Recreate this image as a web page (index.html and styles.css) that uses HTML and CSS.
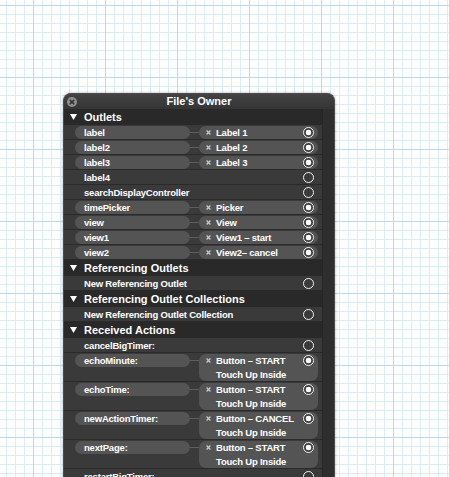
FILE: index.html
```html
<!DOCTYPE html>
<html>
<head>
<meta charset="utf-8">
<link rel="stylesheet" href="styles.css">
</head>
<body>
<div class="canvas">
  <div class="panel">
    <div class="titlebar">
      <span class="close"><svg width="10" height="10" viewBox="0 0 10 10"><circle cx="5" cy="5" r="5" fill="#8e8e8e"/><path d="M3.2 3.2 L6.8 6.8 M6.8 3.2 L3.2 6.8" stroke="#2e2e2e" stroke-width="1.6" stroke-linecap="round"/></svg></span>
      <span class="title">File's Owner</span>
      <span></span>
    </div>
    <div class="body">
      <div class="list">
        <div class="section"><svg class="tri" width="7" height="6" viewBox="0 0 7 6"><polygon points="0,0 7,0 3.5,6" fill="#fff"/></svg>Outlets</div>

        <div class="row"><div class="src pill">label</div><div class="wire"></div><div class="dst pill"><svg class="xm" width="5" height="5" viewBox="0 0 5 5"><path d="M0.6 0.6 L4.4 4.4 M4.4 0.6 L0.6 4.4" stroke="#c4c4c4" stroke-width="1.4"/></svg><span class="txt">Label 1</span><span class="radio on"></span></div></div>
        <div class="row"><div class="src pill">label2</div><div class="wire"></div><div class="dst pill"><svg class="xm" width="5" height="5" viewBox="0 0 5 5"><path d="M0.6 0.6 L4.4 4.4 M4.4 0.6 L0.6 4.4" stroke="#c4c4c4" stroke-width="1.4"/></svg><span class="txt">Label 2</span><span class="radio on"></span></div></div>
        <div class="row"><div class="src pill">label3</div><div class="wire"></div><div class="dst pill"><svg class="xm" width="5" height="5" viewBox="0 0 5 5"><path d="M0.6 0.6 L4.4 4.4 M4.4 0.6 L0.6 4.4" stroke="#c4c4c4" stroke-width="1.4"/></svg><span class="txt">Label 3</span><span class="radio on"></span></div></div>
        <div class="row"><div class="src">label4</div><div></div><div class="dst"><span class="radio"></span></div></div>
        <div class="row"><div class="src">searchDisplayController</div><div></div><div class="dst"><span class="radio"></span></div></div>
        <div class="row"><div class="src pill">timePicker</div><div class="wire"></div><div class="dst pill"><svg class="xm" width="5" height="5" viewBox="0 0 5 5"><path d="M0.6 0.6 L4.4 4.4 M4.4 0.6 L0.6 4.4" stroke="#c4c4c4" stroke-width="1.4"/></svg><span class="txt">Picker</span><span class="radio on"></span></div></div>
        <div class="row"><div class="src pill">view</div><div class="wire"></div><div class="dst pill"><svg class="xm" width="5" height="5" viewBox="0 0 5 5"><path d="M0.6 0.6 L4.4 4.4 M4.4 0.6 L0.6 4.4" stroke="#c4c4c4" stroke-width="1.4"/></svg><span class="txt">View</span><span class="radio on"></span></div></div>
        <div class="row"><div class="src pill">view1</div><div class="wire"></div><div class="dst pill"><svg class="xm" width="5" height="5" viewBox="0 0 5 5"><path d="M0.6 0.6 L4.4 4.4 M4.4 0.6 L0.6 4.4" stroke="#c4c4c4" stroke-width="1.4"/></svg><span class="txt">View1 – start</span><span class="radio on"></span></div></div>
        <div class="row"><div class="src pill">view2</div><div class="wire"></div><div class="dst pill"><svg class="xm" width="5" height="5" viewBox="0 0 5 5"><path d="M0.6 0.6 L4.4 4.4 M4.4 0.6 L0.6 4.4" stroke="#c4c4c4" stroke-width="1.4"/></svg><span class="txt">View2– cancel</span><span class="radio on"></span></div></div>

        <div class="section"><svg class="tri" width="7" height="6" viewBox="0 0 7 6"><polygon points="0,0 7,0 3.5,6" fill="#fff"/></svg>Referencing Outlets</div>
        <div class="row"><div class="src">New Referencing Outlet</div><div></div><div class="dst"><span class="radio"></span></div></div>

        <div class="section"><svg class="tri" width="7" height="6" viewBox="0 0 7 6"><polygon points="0,0 7,0 3.5,6" fill="#fff"/></svg>Referencing Outlet Collections</div>
        <div class="row"><div class="src">New Referencing Outlet Collection</div><div></div><div class="dst"><span class="radio"></span></div></div>

        <div class="section"><svg class="tri" width="7" height="6" viewBox="0 0 7 6"><polygon points="0,0 7,0 3.5,6" fill="#fff"/></svg>Received Actions</div>
        <div class="row"><div class="src">cancelBigTimer:</div><div></div><div class="dst"><span class="radio"></span></div></div>
        <div class="row tall"><div class="src pill">echoMinute:</div><div class="wire"></div><div class="dst pill"><svg class="xm" width="5" height="5" viewBox="0 0 5 5"><path d="M0.6 0.6 L4.4 4.4 M4.4 0.6 L0.6 4.4" stroke="#c4c4c4" stroke-width="1.4"/></svg><span class="txt">Button – START<br>Touch Up Inside</span><span class="radio on"></span></div></div>
        <div class="row tall"><div class="src pill">echoTime:</div><div class="wire"></div><div class="dst pill"><svg class="xm" width="5" height="5" viewBox="0 0 5 5"><path d="M0.6 0.6 L4.4 4.4 M4.4 0.6 L0.6 4.4" stroke="#c4c4c4" stroke-width="1.4"/></svg><span class="txt">Button – START<br>Touch Up Inside</span><span class="radio on"></span></div></div>
        <div class="row tall"><div class="src pill">newActionTimer:</div><div class="wire"></div><div class="dst pill"><svg class="xm" width="5" height="5" viewBox="0 0 5 5"><path d="M0.6 0.6 L4.4 4.4 M4.4 0.6 L0.6 4.4" stroke="#c4c4c4" stroke-width="1.4"/></svg><span class="txt">Button – CANCEL<br>Touch Up Inside</span><span class="radio on"></span></div></div>
        <div class="row tall"><div class="src pill">nextPage:</div><div class="wire"></div><div class="dst pill"><svg class="xm" width="5" height="5" viewBox="0 0 5 5"><path d="M0.6 0.6 L4.4 4.4 M4.4 0.6 L0.6 4.4" stroke="#c4c4c4" stroke-width="1.4"/></svg><span class="txt">Button – START<br>Touch Up Inside</span><span class="radio on"></span></div></div>
        <div class="row"><div class="src">restartBigTimer:</div><div></div><div class="dst"><span class="radio"></span></div></div>
        <div class="row"><div class="src">startBigTimer:</div><div></div><div class="dst"><span class="radio"></span></div></div>
      </div>
      <div class="scroller"></div>
    </div>
  </div>
</div>
</body>
</html>
```

FILE: styles.css
```css
html, body {
  margin: 0;
  padding: 0;
}
body {
  width: 449px;
  height: 477px;
  overflow: hidden;
  background-color: #ffffff;
  background-image:
    linear-gradient(90deg, #bdd8e8 1px, transparent 1px),
    linear-gradient(180deg, #bdd8e8 1px, transparent 1px),
    linear-gradient(90deg, #dcecf6 1px, transparent 1px),
    linear-gradient(180deg, #dcecf6 1px, transparent 1px);
  background-size: 72px 72px, 72px 72px, 9px 9px, 9px 9px;
  background-position: 33px 0, 0 5px, 6px 0, 0 5px;
  font-family: "Liberation Sans", Arial, sans-serif;
  color: #fff;
}
.canvas {
  padding: 93px 0 0 63px;
}
.panel {
  width: 270px;
  border: 1px solid #4c4c4c;
  border-bottom: none;
  border-radius: 8px 8px 0 0;
  background: #3a3a3a;
  box-shadow: 0 0 3px rgba(0,0,0,0.35);
  overflow: hidden;
}
.titlebar {
  height: 15px;
  display: grid;
  grid-template-columns: 1fr auto 1fr;
  align-items: center;
  background: linear-gradient(#424242, #353535);
  padding-left: 3px;
  padding-right: 3px;
}
.close {
  width: 10px;
  height: 10px;
  display: block;
}
.close svg { display: block; }
.title {
  font-weight: bold;
  font-size: 11px;
  line-height: 15px;
  white-space: nowrap;
}
.body {
  display: flex;
  align-items: stretch;
}
.list {
  width: 258px;
}
.scroller {
  width: 11px;
  background: #2e2e2e;
  border-left: 1px solid #262626;
}
.section {
  height: 16px;
  display: flex;
  align-items: center;
  padding-left: 6px;
  background: #292929;
  font-weight: bold;
  font-size: 11px;
  white-space: nowrap;
}
.tri {
  display: block;
  margin-right: 7px;
}
.row {
  display: grid;
  grid-template-columns: 115px 9px 119px;
  align-items: start;
  padding-left: 11px;
  height: 14px;
  border-bottom: 1px solid #2a2a2a;
  background: #3a3a3a;
  font-weight: bold;
  font-size: 9.5px;
  letter-spacing: -0.2px;
}
.row.tall {
  height: 28px;
}
.src {
  height: 13px;
  margin-top: 1px;
  padding-left: 9px;
  line-height: 13px;
  border-radius: 7px;
  white-space: nowrap;
}
.pill {
  background: #545454;
}
.wire {
  height: 1px;
  margin-top: 7px;
  background: #5e5e5e;
}
.dst {
  height: 13px;
  margin-top: 1px;
  display: flex;
  align-items: flex-start;
  padding: 0 4px 0 7px;
  border-radius: 7px;
}
.row.tall .dst {
  height: 27px;
}
.xm {
  display: block;
  flex: none;
  margin-top: 4px;
  margin-right: 5px;
}
.txt {
  line-height: 13px;
  white-space: nowrap;
}
.row.tall .txt {
  line-height: 14px;
}
.radio {
  margin-left: auto;
  margin-top: 1px;
  flex: none;
  width: 11px;
  height: 11px;
  box-sizing: border-box;
  border: 1.2px solid #f2f2f2;
  border-radius: 50%;
}
.radio.on {
  border-width: 1.5px;
  background: radial-gradient(circle, #ffffff 0 2.6px, #3e3e3e 3.1px);
}
```
